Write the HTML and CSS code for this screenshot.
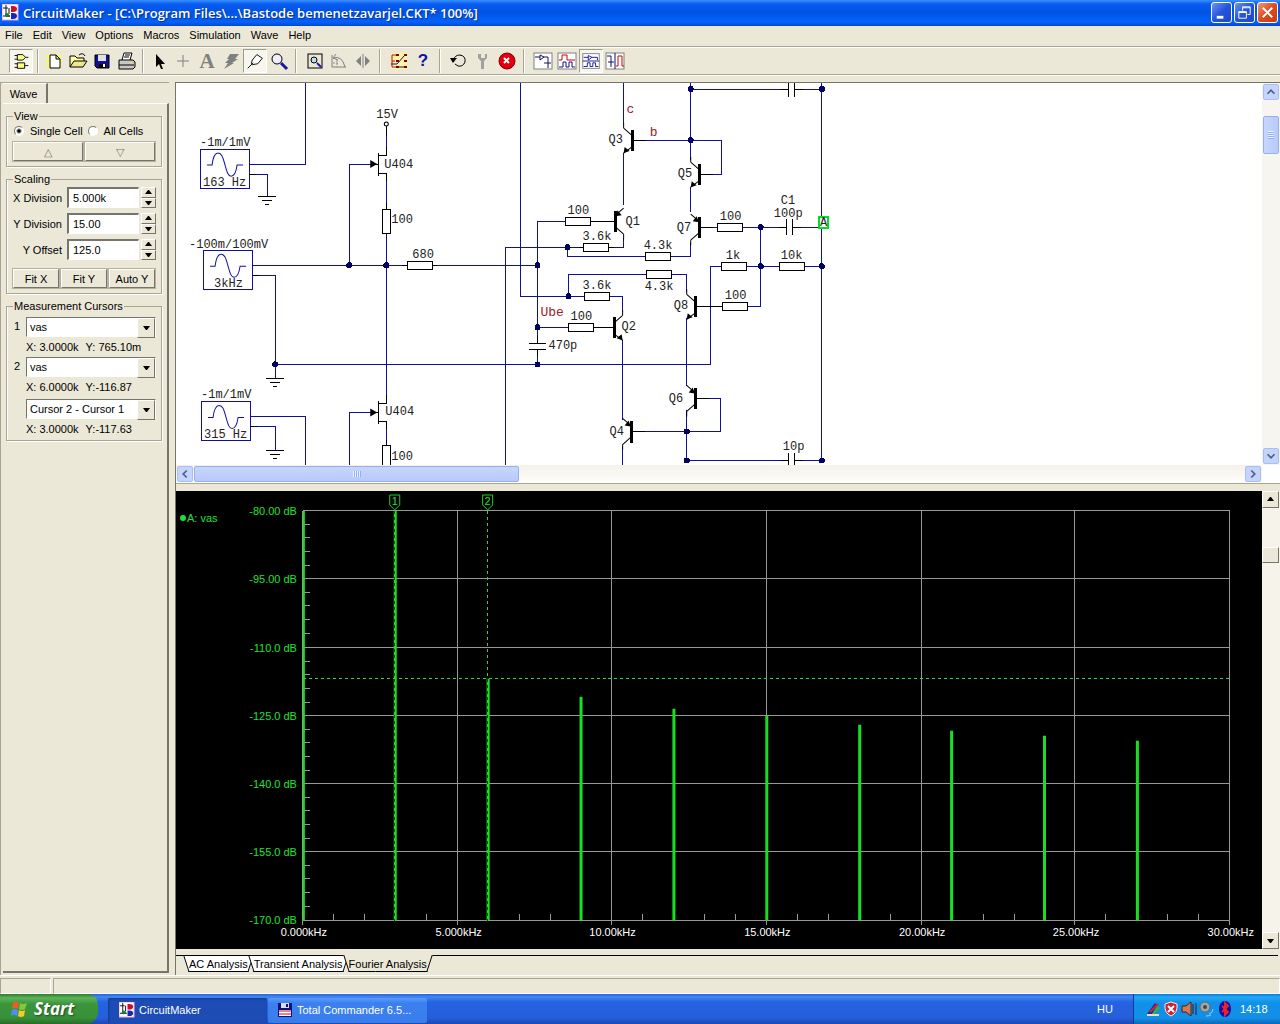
FILE: index.html
```html
<!DOCTYPE html>
<html lang="en">
<head>
    <meta charset="UTF-8">
    <meta name="viewport" content="width=device-width, initial-scale=1.0">
    <title>CircuitMaker</title>
    <link rel="stylesheet" href="styles.css">
</head>
<body>
    <!-- shared shapes -->
    <svg class="defs" aria-hidden="true">
        <defs>
            <g id="logo">
                <rect width="16" height="16" fill="#fff" stroke="#e8a0e0"/>
                <path d="M1 4h5M4 1v11h4M1 12h7M7 4v6" stroke="#111" fill="none"/>
                <path d="M9 2h2q4 0 4 3t-4 3H9z" fill="#c8102e"/>
                <circle cx="5" cy="11" r="2" fill="#168040"/>
                <path d="M9 9h2q4 0 4 3t-4 3H9z" fill="#1428b4"/>
            </g>
            <g id="res"><rect width="25" height="8" fill="#fff" stroke="#000"/></g>
            <g id="dot"><circle r="3" fill="#000060"/></g>
            <g id="ground"><path d="M-9 0H9M-5 4H5M-2 8H2" stroke="#000"/></g>
            <g id="source">
                <rect width="49" height="39" fill="none" stroke="#10109c"/>
                <path class="smooth" d="M7 16h5c1-8 3-12 6-12c4 0 5 5 7 12s3 11 6 11s5-4 6-11h6" fill="none" stroke="#10109c"/>
                <path d="M49 25h7" stroke="#000"/>
            </g>
            <g id="npn">
                <path class="smooth" d="M0-12L8-5M8 7L0 13M0-17v5" stroke="#000"/>
                <path d="M10 0h12" stroke="#000"/>
                <rect x="7" y="-10" width="3" height="21"/>
                <path class="smooth" d="M0 13l1-6l5 4z"/>
            </g>
            <g id="pnp">
                <path class="smooth" d="M0-13L8-6M8 6L0 13M0 13v5" stroke="#000"/>
                <path d="M10 0h12" stroke="#000"/>
                <rect x="7" y="-10" width="3" height="21"/>
                <path class="smooth" d="M8-5l-6-1l4-5z"/>
            </g>
            <g id="jfet">
                <path d="M8-17v8H0M0-11v23M0 9h8v8M-8 0h8" stroke="#000" fill="none"/>
                <path class="smooth" d="M-8-4L-1 0L-8 4z"/>
            </g>
        </defs>
    </svg>

    <header class="titlebar">
        <svg width="17" height="17" viewBox="0 0 17 17"><use href="#logo"/></svg>
        <h1>CircuitMaker - [C:\Program Files\...\Bastode bemenetzavarjel.CKT* 100%]</h1>
        <div class="window-buttons">
            <button type="button" aria-label="Minimize"><svg viewBox="0 0 20 20"><path d="M5 15h7" stroke="#fff" stroke-width="3"/></svg></button>
            <button type="button" aria-label="Restore"><svg viewBox="0 0 20 20"><path d="M4 9h8v7H4zM4 10h8M8 8V4h8v8h-3M8 5h8" stroke="#fff" fill="none"/></svg></button>
            <button type="button" class="close" aria-label="Close"><svg viewBox="0 0 20 20"><path d="M5 5l10 10M15 5L5 15" stroke="#fff" stroke-width="2"/></svg></button>
        </div>
    </header>

    <nav class="menu">
        <a href="#">File</a>
        <a href="#">Edit</a>
        <a href="#">View</a>
        <a href="#">Options</a>
        <a href="#">Macros</a>
        <a href="#">Simulation</a>
        <a href="#">Wave</a>
        <a href="#">Help</a>
    </nav>

    <div class="toolbar">
        <button type="button" class="pressed" aria-label="Parts"><svg viewBox="0 0 24 24"><path d="M8 5h6l3 3l-3 3H8zM8 14h8v6H8z" fill="#ffff80" stroke="#000"/><path d="M5 6h3M5 10h3M17 8h3M5 15h3M5 19h3M16 17h4" stroke="#000"/></svg></button>
        <span class="sep"></span>
        <button type="button" aria-label="New"><svg viewBox="0 0 24 24"><path d="M5 6l3 3M19 6l-3 3M5 18l3-3M19 18l-3-3M4 12h16M12 4v15" stroke="#ffff30" stroke-width="2"/><path d="M8 6h6l4 4v9H8zM14 6v4h4" fill="#fff" stroke="#000"/></svg></button>
        <button type="button" aria-label="Open"><svg viewBox="0 0 24 24"><path d="M4 18V7h5l2 2h7v3" fill="#ffffa0" stroke="#000"/><path d="M4 18l4-6h13l-4 6z" fill="#f0e890" stroke="#000"/><path d="M13 6q4-3 6 1" fill="none" stroke="#000"/></svg></button>
        <button type="button" aria-label="Save"><svg viewBox="0 0 24 24"><path d="M5 6h14v13H7l-2-2z" fill="#101090" stroke="#000"/><path d="M8 6h8v6H8z" fill="#e0e0e0"/><path d="M9 15h7v4H9z" fill="#000"/><path d="M13 15h2v3h-2z" fill="#fff"/></svg></button>
        <button type="button" aria-label="Print"><svg viewBox="0 0 24 24"><path d="M8 11l2-7h8l-2 7" fill="#fff" stroke="#000"/><path d="M11 6h5M10 8h5" stroke="#000"/><path d="M5 11h14l2 2v5l-2 2H5z" fill="#c8c8c8" stroke="#000"/><path d="M5 16h15" stroke="#000"/><path d="M16 14h2" stroke="#ee0"/></svg></button>
        <span class="sep"></span>
        <button type="button" aria-label="Select"><svg viewBox="0 0 24 24"><path d="M9 5v13l3-3l2 5h2l-2-5h4z"/></svg></button>
        <button type="button" aria-label="Wire"><svg viewBox="0 0 24 24"><path d="M12 6v12M6 12h12" stroke="#808080"/></svg></button>
        <button type="button" class="letter" aria-label="Text">A</button>
        <button type="button" aria-label="Delete"><svg viewBox="0 0 24 24"><path d="M11 5h9l-4 5h3l-6 4h2l-10 6l4-6H6l4-4H8z" fill="#808080"/></svg></button>
        <button type="button" class="pressed" aria-label="Probe"><svg viewBox="0 0 24 24"><path d="M4 20l6-6M9 11l5-6l6 4l-5 6l-6 1l-1-1z" fill="#fff" stroke="#000"/></svg></button>
        <button type="button" aria-label="Zoom"><svg viewBox="0 0 24 24"><circle cx="10" cy="10" r="5" fill="#eef" stroke="#000"/><path d="M14 14l6 6" stroke="#1818a0" stroke-width="3"/></svg></button>
        <span class="sep wide"></span>
        <button type="button" aria-label="Fit"><svg viewBox="0 0 24 24"><rect x="5" y="5" width="14" height="14" fill="none" stroke="#000"/><circle cx="11" cy="11" r="3" fill="#bde" stroke="#000"/><path d="M14 14l4 4" stroke="#1818a0" stroke-width="2"/></svg></button>
        <button type="button" aria-label="Rotate"><svg viewBox="0 0 24 24"><path d="M5 6v12h14M6 9q9-3 12 9M9 5l-3 4l5 2" fill="none" stroke="#808080"/><path d="M10 11v7M6 14h6" stroke="#909090" stroke-dasharray="2 1"/></svg></button>
        <button type="button" aria-label="Mirror"><svg viewBox="0 0 24 24"><path d="M12 5v14" stroke="#808080"/><path d="M10 7v10l-5-5zM14 7v10l5-5z" fill="#808080"/></svg></button>
        <span class="sep wide"></span>
        <button type="button" aria-label="Digital"><svg viewBox="0 0 24 24"><rect x="4" y="4" width="16" height="16" fill="#fff4a0"/><path d="M5 6v12M5 6h4M5 12h3M5 18h4" stroke="#c01010" fill="none"/><path d="M9 5h3v2H9zM17 5h3v2h-3zM9 11h3v2H9zM17 11h3v2h-3zM9 17h3v2H9zM17 17h3v2h-3z" fill="#800000"/><path d="M4 15h6l7-8M12 18h5" stroke="#101090" fill="none"/></svg></button>
        <button type="button" class="help" aria-label="Help">?</button>
        <span class="sep wide"></span>
        <button type="button" aria-label="Reset"><svg viewBox="0 0 24 24"><path d="M6 11q2-5 7-5q6 1 5 7q-2 5-7 4l-3-2" fill="none" stroke="#000"/><path d="M3 9h7l-4 5z"/></svg></button>
        <button type="button" aria-label="Setup"><svg viewBox="0 0 24 24"><path d="M7 5v4l3 3v8h3v-8l3-3V5h-2v4h-4V5z" fill="#a0a0a0"/></svg></button>
        <button type="button" aria-label="Stop"><svg viewBox="0 0 24 24"><circle cx="12" cy="12" r="8" fill="#e00010" stroke="#800"/><path d="M9 9l5 5M14 9l-5 5" stroke="#fff" stroke-width="2"/></svg></button>
        <span class="sep wide"></span>
        <button type="button" aria-label="Schematic"><svg viewBox="0 0 24 24"><rect x="3" y="4" width="18" height="16" fill="#fff" stroke="#808080"/><path d="M4 8h5M9 6l4 2l-4 3zM13 8h4v6M13 14h7M17 14v5" fill="none" stroke="#101060"/></svg></button>
        <button type="button" aria-label="Waves"><svg viewBox="0 0 24 24"><rect x="3" y="4" width="18" height="16" fill="#fff" stroke="#808080"/><path d="M4 11h3V6h5v5h8" fill="none" stroke="#d00000"/><path d="M4 18h4v-5h3v5h3v-5h3v5h3" fill="none" stroke="#101090"/></svg></button>
        <button type="button" class="pressed" aria-label="Split horizontally"><svg viewBox="0 0 24 24"><rect x="3" y="4" width="18" height="16" fill="#fff" stroke="#808080"/><path d="M4 8h5M9 6l4 2l-4 3zM13 8h6v3M3 12h18M4 18h4v-4h3v4h3v-4h3v4h3" fill="none" stroke="#101090"/></svg></button>
        <button type="button" aria-label="Split vertically"><svg viewBox="0 0 24 24"><rect x="3" y="4" width="18" height="16" fill="#fff" stroke="#808080"/><path d="M12 4v16M4 7h4v6M5 13h6M8 13v5" fill="none" stroke="#101060"/><path d="M13 17h2V7h4v10h2" fill="none" stroke="#d00000"/></svg></button>
    </div>

    <main class="workspace">
        <aside class="side">
            <button type="button" class="side-tab">Wave</button>
            <div class="side-page">
                <fieldset>
                    <legend>View</legend>
                    <div class="radios">
                        <label><input type="radio" name="cells" checked>Single Cell</label>
                        <label><input type="radio" name="cells">All Cells</label>
                    </div>
                    <div class="button-row">
                        <button type="button" class="dim">△</button>
                        <button type="button" class="dim">▽</button>
                    </div>
                </fieldset>

                <fieldset>
                    <legend>Scaling</legend>
                    <div class="scale-row">
                        <label for="xdiv">X Division</label>
                        <input type="text" id="xdiv" value="5.000k">
                        <div class="spin"><button type="button" aria-label="Up"></button><button type="button" aria-label="Down"></button></div>
                    </div>
                    <div class="scale-row">
                        <label for="ydiv">Y Division</label>
                        <input type="text" id="ydiv" value="15.00">
                        <div class="spin"><button type="button" aria-label="Up"></button><button type="button" aria-label="Down"></button></div>
                    </div>
                    <div class="scale-row">
                        <label for="yoff">Y Offset</label>
                        <input type="text" id="yoff" value="125.0">
                        <div class="spin"><button type="button" aria-label="Up"></button><button type="button" aria-label="Down"></button></div>
                    </div>
                    <div class="button-row fit">
                        <button type="button">Fit X</button>
                        <button type="button">Fit Y</button>
                        <button type="button">Auto Y</button>
                    </div>
                </fieldset>

                <fieldset class="cursors">
                    <legend>Measurement Cursors</legend>
                    <label for="cur1">1</label>
                    <div class="combo"><select id="cur1"><option>vas</option></select></div>
                    <p><span>X: 3.0000k</span><span>Y: 765.10m</span></p>
                    <label for="cur2">2</label>
                    <div class="combo"><select id="cur2"><option>vas</option></select></div>
                    <p><span>X: 6.0000k</span><span>Y:-116.87</span></p>
                    <div class="combo diff"><select aria-label="Difference"><option>Cursor 2 - Cursor 1</option></select></div>
                    <p><span>X: 3.0000k</span><span>Y:-117.63</span></p>
                </fieldset>
            </div>
        </aside>

        <section class="views">
            <div class="schematic">
                <svg class="sheet" viewBox="176 83 1085 381" preserveAspectRatio="xMinYMin slice">
                    <!-- wires -->
                    <g class="wire">
                        <path d="M249 164H305V83M256 174H267V196M252 265H537M259 275H275V378"/>
                        <path d="M250 416H305V464M257 426H275V450M275 364H710V266H721"/>
                        <path d="M386 128V148M349 265V164H371M386 181V403M349 464V412H371M386 429V445"/>
                        <path d="M520 83V296H584M505 464V247H583M537 221H565M537 221V343M537 349V364M537 327H568"/>
                        <path d="M623 83V124M623 153V205M623 238V247H608M567 247V256H645M670 256H690V243"/>
                        <path d="M640 140H721V174H708M690 83V160M690 89H788M794 89H821M821 83V460"/>
                        <path d="M690 187V212M708 227H717M742 227H786M792 227H821M760 227V306H747M746 266H779M804 266H821"/>
                        <path d="M568 296V274H646M671 274H686V292M609 296H622V312M622 340V420M622 446V464"/>
                        <path d="M686 318V386M705 398H720V431H642M686 410V460M686 460H788M794 460H821"/>
                    </g>
                    <!-- sources -->
                    <use href="#source" x="200" y="149"/>
                    <use href="#source" x="203" y="250"/>
                    <use href="#source" x="201" y="401"/>
                    <use href="#ground" x="267" y="196"/>
                    <use href="#ground" x="275" y="378"/>
                    <use href="#ground" x="275" y="450"/>
                    <!-- resistors -->
                    <use href="#res" x="407" y="261"/>
                    <use href="#res" x="565" y="217"/>
                    <use href="#res" x="583" y="243"/>
                    <use href="#res" x="645" y="252"/>
                    <use href="#res" x="646" y="270"/>
                    <use href="#res" x="584" y="292"/>
                    <use href="#res" x="568" y="323"/>
                    <use href="#res" x="717" y="223"/>
                    <use href="#res" x="721" y="262"/>
                    <use href="#res" x="779" y="262"/>
                    <use href="#res" x="722" y="302"/>
                    <rect x="382" y="209" width="8" height="24" fill="#fff" stroke="#000"/>
                    <rect x="382" y="445" width="8" height="24" fill="#fff" stroke="#000"/>
                    <path class="lead" d="M402 265h5M432 265h5M590 221h16M593 327h12M696 306h26M578 247h5M608 247h5M386 203v6M386 440v5"/>
                    <!-- capacitors -->
                    <path class="lead" d="M788 83v14M794 83v14M786 219v16M792 219v16M529 343h16M529 349h16M788 452v12M794 452v12M780 89h8M794 89h8M778 227h8M792 227h8M780 460h8M794 460h8M537 336v7M537 349v7"/>
                    <!-- transistors -->
                    <use href="#jfet" x="378" y="164"/>
                    <use href="#jfet" x="378" y="412"/>
                    <use href="#npn" x="623" y="140"/>
                    <use href="#npn" x="690" y="174"/>
                    <use href="#npn" x="686" y="306"/>
                    <use href="#pnp" x="690" y="227"/>
                    <use href="#pnp" x="686" y="398"/>
                    <use href="#pnp" x="622" y="431"/>
                    <use href="#pnp" transform="translate(623 221) scale(-1 1)"/>
                    <use href="#npn" transform="translate(622 327) scale(-1 1)"/>
                    <path class="lead" d="M386 126v10"/>
                    <circle class="smooth" cx="386" cy="124" r="2" fill="#fff" stroke="#000"/>
                    <!-- junctions -->
                    <use href="#dot" x="349" y="265"/>
                    <use href="#dot" x="386" y="265"/>
                    <use href="#dot" x="275" y="364"/>
                    <use href="#dot" x="537" y="265"/>
                    <use href="#dot" x="537" y="327"/>
                    <use href="#dot" x="537" y="364"/>
                    <use href="#dot" x="567" y="247"/>
                    <use href="#dot" x="568" y="296"/>
                    <use href="#dot" x="690" y="89"/>
                    <use href="#dot" x="690" y="140"/>
                    <use href="#dot" x="821" y="89"/>
                    <use href="#dot" x="760" y="227"/>
                    <use href="#dot" x="760" y="266"/>
                    <use href="#dot" x="821" y="266"/>
                    <use href="#dot" x="686" y="431"/>
                    <use href="#dot" x="686" y="460"/>
                    <use href="#dot" x="821" y="460"/>
                    <rect x="818" y="217" width="9" height="11" fill="#fff" stroke="#00e020" stroke-width="2"/>
                    <!-- labels -->
                    <g class="part">
                        <text x="200" y="146">-1m/1mV</text><text x="203" y="186">163 Hz</text>
                        <text x="189" y="248">-100m/100mV</text><text x="214" y="287">3kHz</text>
                        <text x="201" y="398">-1m/1mV</text><text x="204" y="438">315 Hz</text>
                        <text x="376" y="118">15V</text><text x="384" y="168">U404</text>
                        <text x="391" y="223">100</text><text x="412" y="258">680</text>
                        <text x="385" y="415">U404</text><text x="391" y="459">100</text>
                        <text x="608" y="143">Q3</text><text x="625" y="225">Q1</text>
                        <text x="677" y="177">Q5</text><text x="676" y="231">Q7</text>
                        <text x="567" y="214">100</text><text x="582" y="240">3.6k</text>
                        <text x="643" y="249">4.3k</text><text x="719" y="220">100</text>
                        <text x="780" y="204">C1</text><text x="773" y="217">100p</text>
                        <text x="725" y="259">1k</text><text x="780" y="259">10k</text>
                        <text x="582" y="289">3.6k</text><text x="644" y="290">4.3k</text>
                        <text x="570" y="320">100</text><text x="621" y="330">Q2</text>
                        <text x="673" y="309">Q8</text><text x="724" y="299">100</text>
                        <text x="548" y="349">470p</text><text x="668" y="402">Q6</text>
                        <text x="609" y="435">Q4</text><text x="782" y="449">10p</text>
                        <text x="819" y="226">A</text>
                    </g>
                    <g class="net">
                        <text x="626" y="113">c</text><text x="649" y="136">b</text><text x="540" y="316">Ube</text>
                    </g>
                </svg>
                <div class="xp-scroll vert">
                    <button type="button" aria-label="Scroll up"><svg viewBox="0 0 16 16"><path d="M4 10l4-4l4 4"/></svg></button>
                    <div class="thumb"></div>
                    <button type="button" class="end" aria-label="Scroll down"><svg viewBox="0 0 16 16"><path d="M4 6l4 4l4-4"/></svg></button>
                </div>
                <div class="xp-scroll horiz">
                    <button type="button" aria-label="Scroll left"><svg viewBox="0 0 16 16"><path d="M10 4l-4 4l4 4"/></svg></button>
                    <div class="thumb"></div>
                    <button type="button" class="end" aria-label="Scroll right"><svg viewBox="0 0 16 16"><path d="M6 4l4 4l-4 4"/></svg></button>
                </div>
            </div>

            <div class="analysis">
                <svg class="plot" id="plot" viewBox="176 490 1085 459" preserveAspectRatio="xMinYMin meet">
                    <circle cx="183" cy="517" r="3" fill="#20e030"/>
                    <text class="green" x="187" y="521">A: vas</text>
                </svg>
                <div class="old-scroll">
                    <button type="button" aria-label="Scroll up"></button>
                    <div class="thumb"></div>
                    <button type="button" class="end" aria-label="Scroll down"></button>
                </div>
            </div>

            <div class="tabs">
                <button type="button"><span>AC Analysis</span></button>
                <button type="button"><span>Transient Analysis</span></button>
                <button type="button" class="active"><span>Fourier Analysis</span></button>
            </div>
        </section>
    </main>

    <div class="status"><span></span><span></span></div>

    <footer class="taskbar">
        <button type="button" class="start">
            <svg width="20" height="20" viewBox="0 0 20 20"><path d="M3 4q3-2 6 0l-1 6q-3-2-6 0z" fill="#f05a28"/><path d="M10 4q3 2 7 0l-2 6q-3 2-6 0z" fill="#7ccc3c"/><path d="M2 11q3-2 6 0l-1 6q-3-2-6 0z" fill="#4a90f0"/><path d="M9 11q3 2 6 0l-1 6q-3 2-6 0z" fill="#fcc828"/></svg>
            Start
        </button>
        <button type="button" class="task current"><svg width="16" height="16" viewBox="0 0 17 17"><use href="#logo"/></svg>CircuitMaker</button>
        <button type="button" class="task"><svg width="16" height="16" viewBox="0 0 16 16"><path d="M1 1h14v14H1z" fill="#101080"/><path d="M4 1h8v5H4z" fill="#ddd"/><path d="M9 2h2v3H9z" fill="#101080"/><path d="M2 8h12v6H2z" fill="#fff"/><path d="M2 9h12M2 12h12" stroke="#c01020"/></svg>Total Commander 6.5...</button>
        <span class="lang">HU</span>
        <div class="tray">
            <svg width="16" height="16" viewBox="0 0 16 16"><path d="M2 13l8-11l2 2l-5 9z" fill="#1a2a90"/><path d="M7 13l6-8l2 2l-5 6z" fill="#30b040"/><path d="M5 11l8-8" stroke="#e02020" stroke-width="2"/><path d="M2 14h12" stroke="#e8e0c0" stroke-width="2"/></svg>
            <svg width="16" height="16" viewBox="0 0 16 16"><path d="M8 1l6 2q1 9-6 12q-7-3-6-12z" fill="#d02030" stroke="#eee"/><path d="M5 5l6 6M11 5l-6 6" stroke="#fff" stroke-width="2"/></svg>
            <svg width="16" height="16" viewBox="0 0 16 16"><path d="M1 5h4l5-4v14l-5-4H1z" fill="#d87850" stroke="#402020"/><path d="M12 3v10M15 2v12" stroke="#222"/></svg>
            <svg width="16" height="16" viewBox="0 0 16 16"><circle cx="6" cy="6" r="5" fill="#a0a8a8" stroke="#606868"/><circle cx="6" cy="6" r="2" fill="#404848"/><path d="M10 13q4-1 4-5M7 15q3 0 5-1" stroke="#9cf" fill="none"/></svg>
            <svg width="16" height="16" viewBox="0 0 16 16"><ellipse cx="8" cy="8" rx="6" ry="8" fill="#1010a0"/><path d="M5 5l6 6l-3 3V2l3 3l-6 6" fill="none" stroke="#f02030" stroke-width="2"/></svg>
            <time>14:18</time>
        </div>
    </footer>

    <script>
        const plot = document.getElementById("plot");
        const gridX = [303, 458, 612, 767, 922, 1076, 1231];
        const gridY = [510, 578, 647, 715, 783, 851, 920];
        const freq = ["0.000kHz", "5.000kHz", "10.00kHz", "15.00kHz", "20.00kHz", "25.00kHz", "30.00kHz"];
        const level = ["-80.00 dB", "-95.00 dB", "-110.0 dB", "-125.0 dB", "-140.0 dB", "-155.0 dB", "-170.0 dB"];
        // x, top of every harmonic of 3 kHz
        const harmonics = [[395, 510], [488, 678], [581, 696], [674, 708], [767, 715], [860, 724], [952, 730], [1045, 735], [1138, 740]];

        let grid = "";
        gridX.forEach((x, i) => {
            grid += `M${x} 510V925`;
            for (let n = 1; n < 5 && i < 6; n++) grid += `M${x + n * 31} 913v7`;
        });
        gridY.forEach((y, i) => {
            grid += `M303 ${y}H1231`;
            for (let n = 1; n < 5 && i < 6; n++) grid += `M304 ${Math.round(y + n * 68.2 / 5)}h6`;
        });

        let out = `<path class="grid" d="${grid}"/><path class="axis" d="M304 510V920"/>`;
        harmonics.forEach(([x, top]) => {
            out += `<rect class="bar" x="${x - 1}" y="${top}" width="3" height="${920 - top}"/>`;
        });
        out += `<path class="dash dark" d="M395 510V920M488 678V920"/>`;
        out += `<path class="dash" d="M488 510V678M303 678H1231"/>`;
        [395, 488].forEach((x, i) => {
            out += `<path class="flag" d="M${x - 5} 494h10v10l-5 5l-5-5z"/><text class="green mid" x="${x}" y="504">${i + 1}</text>`;
        });
        gridX.forEach((x, i) => out += `<text class="white mid" x="${x + 1}" y="936">${freq[i]}</text>`);
        gridY.forEach((y, i) => out += `<text class="green end" x="297" y="${y + 4}">${level[i]}</text>`);
        plot.innerHTML += out;
    </script>
</body>
</html>
```
FILE: styles.css
```css
* {
    box-sizing: border-box;
    margin: 0;
    padding: 0;
}
body {
    display: flex;
    flex-direction: column;
    height: 100vh;
    min-height: 700px;
    overflow: hidden;
    background: #ebe8d8;
    color: #000;
    font: 11px/14px "Liberation Sans", Arial, sans-serif;
}
button, input, select {
    font: inherit;
    color: inherit;
    border: none;
    border-radius: 0;
    background: none;
}
svg {
    display: block;
}
.defs {
    position: absolute;
    width: 0;
    height: 0;
}

/* title and menu */
.titlebar {
    display: flex;
    align-items: center;
    gap: 4px;
    height: 26px;
    padding: 0 2px 1px;
    background: linear-gradient(#3a92ff 0, #0a5cf0 4px, #0054e3 12px, #0462fa 22px, #0348d0 26px);
}
.titlebar h1 {
    flex: 1;
    color: #fff;
    font: 600 13px/20px "Open Sans", "Liberation Sans", sans-serif;
    text-shadow: 1px 1px 1px #0a2f8c;
    white-space: nowrap;
}
.window-buttons {
    display: flex;
    gap: 2px;
}
.window-buttons button {
    width: 21px;
    height: 21px;
    border: 1px solid #fff;
    border-radius: 3px;
    background: linear-gradient(135deg, #6a94f4, #2454dc 50%, #1c48cc);
}
.window-buttons .close {
    background: linear-gradient(135deg, #f09878, #dc4c20 50%, #c83c10);
}
.menu {
    display: flex;
    gap: 10px;
    height: 21px;
    padding: 2px 5px;
    border-bottom: 1px solid #a8a595;
}
.menu a {
    color: #000;
    text-decoration: none;
    line-height: 15px;
}

/* toolbar */
.toolbar {
    display: flex;
    align-items: center;
    height: 28px;
    padding: 0 9px;
    border-top: 1px solid #fff;
    border-bottom: 1px solid #a8a595;
}
.toolbar button {
    width: 24px;
    height: 24px;
}
.toolbar .pressed {
    border: 1px solid;
    border-color: #a09d8c #fff #fff #a09d8c;
    background: #f6f5ee;
}
.toolbar .letter {
    color: #808080;
    font: bold 21px/24px "Liberation Serif", serif;
}
.toolbar .help {
    color: #1010a0;
    font: bold 17px/24px "Liberation Sans", sans-serif;
}
.sep {
    width: 9px;
    height: 24px;
    background: linear-gradient(90deg, #a8a595 50%, #fff 50%) 4px 0 / 2px 100% no-repeat;
}
.sep.wide {
    width: 12px;
}

/* left panel */
.workspace {
    display: flex;
    flex: 1;
    min-height: 0;
    padding-top: 6px;
    border-top: 1px solid #fff;
}
.side {
    display: flex;
    flex-direction: column;
    width: 169px;
    margin-right: 6px;
    padding: 0 0 2px 2px;
    border-top: 1px solid #a8a595;
    border-left: 1px solid #a8a595;
}
.side-tab {
    width: 45px;
    height: 20px;
    padding-right: 2px;
    border-top: 1px solid #fff;
    border-right: 2px solid #77756a;
}
.side-page {
    flex: 1;
    padding: 5px 5px 0 3px;
    border-top: 1px solid #fff;
    border-right: 2px solid #77756a;
    border-bottom: 2px solid #77756a;
}
fieldset {
    margin-bottom: 5px;
    padding: 0 5px 4px;
    border: 1px solid #a8a595;
    box-shadow: 1px 1px #fff, inset 1px 0 #fff;
}
legend {
    margin-left: 1px;
    padding: 0 1px;
    line-height: 15px;
}
.radios {
    display: flex;
    gap: 5px;
    height: 17px;
    padding-left: 2px;
}
.radios label {
    display: flex;
    align-items: center;
    gap: 6px;
    height: 13px;
    white-space: nowrap;
}
.radios input {
    appearance: none;
    width: 10px;
    height: 10px;
    border: 1px solid;
    border-color: #77756a #fff #fff #77756a;
    border-radius: 50%;
    background: #fff;
}
.radios input:checked {
    background: radial-gradient(#000 1px, #fff 3px);
}
.button-row {
    display: flex;
}
.button-row.fit {
    margin-top: 8px;
}
.button-row button {
    flex: 1;
    height: 21px;
}
.button-row button, .spin button, .combo::after, .old-scroll button, .old-scroll .thumb {
    border: 1px solid;
    border-color: #fff #77756a #77756a #fff;
    background-color: #ebe8d8;
}
.button-row button {
    outline: 1px solid #b5b2a2;
    outline-offset: -1px;
    border-width: 2px;
}
.button-row .dim {
    color: #77756a;
}
.scale-row {
    display: flex;
    align-items: center;
    gap: 2px;
    height: 21px;
    margin-bottom: 5px;
}
fieldset .scale-row:nth-of-type(3) {
    margin-bottom: 0;
}
.scale-row label {
    flex: 1;
    padding-right: 3px;
    text-align: right;
    white-space: nowrap;
}
.scale-row input {
    width: 72px;
    height: 21px;
    padding: 0 4px;
    border: 1px solid;
    border-top-width: 2px;
    border-left-width: 2px;
    border-color: #77756a #fff #fff #77756a;
    background: #fff;
}
.spin {
    display: flex;
    flex-direction: column;
    width: 15px;
    height: 21px;
}
.spin button {
    flex: 1;
    background: url("data:image/svg+xml,%3Csvg xmlns='http://www.w3.org/2000/svg' width='7' height='4'%3E%3Cpath d='M0 4L3 0h1l3 4z'/%3E%3C/svg%3E") center no-repeat;
}
.spin button + button, .combo::after {
    background: url("data:image/svg+xml,%3Csvg xmlns='http://www.w3.org/2000/svg' width='7' height='4'%3E%3Cpath d='M0 0L3 4h1l3-4z'/%3E%3C/svg%3E") center no-repeat #ebe8d8;
}
.cursors {
    display: grid;
    grid-template-columns: 14px 1fr;
    row-gap: 2px;
    padding-top: 3px;
    padding-bottom: 3px;
}
.cursors label {
    padding-left: 2px;
    line-height: 18px;
}
.cursors p {
    grid-column: 2;
    display: flex;
    gap: 7px;
    height: 16px;
    line-height: 16px;
    white-space: nowrap;
}
.combo {
    position: relative;
    height: 20px;
    border: 1px solid;
    border-color: #77756a #fff #fff #77756a;
    background: #fff;
}
.combo.diff {
    grid-column: 2;
    margin-top: 2px;
}
.combo select {
    appearance: none;
    width: 100%;
    height: 18px;
    padding-left: 3px;
}
.combo::after {
    content: "";
    position: absolute;
    top: 0;
    right: 0;
    width: 16px;
    height: 18px;
    pointer-events: none;
}

/* right side */
.views {
    display: flex;
    flex: 1;
    flex-direction: column;
    min-width: 0;
    border-top: 1px solid #77756a;
    border-left: 1px solid #77756a;
}
.schematic {
    display: grid;
    grid-template-columns: 1fr 18px;
    grid-template-rows: 1fr 18px;
    flex: 400 1 0;
    min-height: 0;
    background: #fff;
    border-bottom: 1px solid #a8a595;
}
.sheet {
    width: 100%;
    height: 100%;
    min-height: 0;
    overflow: hidden;
    shape-rendering: crispEdges;
}
.smooth, .sheet circle {
    shape-rendering: auto;
}
.wire {
    fill: none;
    stroke: #10109c;
}
.lead {
    fill: none;
    stroke: #000;
}
.part text {
    fill: #222;
    font: 12px "Liberation Mono", monospace;
}
.net text {
    fill: #a02028;
    font: 13px "Liberation Mono", monospace;
}
.xp-scroll {
    display: flex;
    padding: 1px;
    background: #f6f5ef;
}
.xp-scroll.vert {
    flex-direction: column;
}
.xp-scroll.horiz {
    background: linear-gradient(#f3f1ea, #fefefb);
}
.xp-scroll button {
    width: 16px;
    height: 16px;
    border: 1px solid #a8bdf0;
    border-radius: 2px;
    background: #c4d4fd;
}
.xp-scroll path {
    fill: none;
    stroke: #4d6185;
    stroke-width: 2;
}
.xp-scroll .end {
    margin-top: auto;
}
.xp-scroll.horiz .end {
    margin: 0 0 0 auto;
}
.xp-scroll .thumb {
    border: 1px solid #98b0e8;
    border-radius: 2px;
    background: repeating-linear-gradient(#eef4fe 0 1px, #8cb0f8 1px 2px) center / 6px 8px no-repeat, linear-gradient(90deg, #c8d6fe, #b8cafa);
}
.xp-scroll.vert .thumb {
    height: 38px;
    margin-top: 16px;
}
.xp-scroll.horiz .thumb {
    width: 30%;
    margin-left: 1px;
    background: repeating-linear-gradient(90deg, #eef4fe 0 1px, #8cb0f8 1px 2px) center / 8px 6px no-repeat, linear-gradient(#c8d6fe, #b8cafa);
}
.analysis {
    display: flex;
    flex: 459 1 0;
    min-height: 0;
    margin-top: 7px;
    background: #000;
}
.plot {
    flex: 1;
    min-width: 0;
    height: 100%;
    font: 11px "Liberation Sans", Arial, sans-serif;
}
.grid {
    fill: none;
    stroke: #989898;
    shape-rendering: crispEdges;
}
.axis {
    stroke: #18e020;
    stroke-width: 2;
}
.bar {
    fill: #18e020;
}
.dash {
    fill: none;
    stroke: #30d838;
    stroke-dasharray: 3 3;
    shape-rendering: crispEdges;
}
.dash.dark {
    stroke: #085008;
}
.flag {
    fill: #000;
    stroke: #20d028;
}
.green {
    fill: #20e030;
}
.white {
    fill: #fff;
}
.mid {
    text-anchor: middle;
}
.end {
    text-anchor: end;
}
.old-scroll {
    display: flex;
    flex-direction: column;
    width: 18px;
    padding-right: 1px;
    background: #f5f3ea;
}
.old-scroll button {
    height: 17px;
    background: url("data:image/svg+xml,%3Csvg xmlns='http://www.w3.org/2000/svg' width='7' height='4'%3E%3Cpath d='M0 4L3 0h1l3 4z'/%3E%3C/svg%3E") center no-repeat #ebe8d8;
}
.old-scroll .end {
    margin-top: auto;
    background: url("data:image/svg+xml,%3Csvg xmlns='http://www.w3.org/2000/svg' width='7' height='4'%3E%3Cpath d='M0 0L3 4h1l3-4z'/%3E%3C/svg%3E") center no-repeat #ebe8d8;
}
.old-scroll .thumb {
    height: 16px;
    margin-top: 39px;
}
.tabs {
    display: flex;
    height: 20px;
    margin: 6px 2px 0 0;
    padding-left: 10px;
    border-top: 1px solid #000;
}
.tabs button {
    position: relative;
    height: 16px;
    padding: 0 3px;
}
.tabs button::before, .tabs button::after {
    content: "";
    position: absolute;
    top: 0;
    bottom: 0;
    width: 60%;
    border-bottom: 1px solid #000;
    background: #fff;
}
.tabs button::before {
    left: 0;
    border-left: 1px solid #000;
    transform: skewX(18deg);
}
.tabs button::after {
    right: 0;
    border-right: 1px solid #000;
    transform: skewX(-18deg);
}
.tabs .active::before, .tabs .active::after {
    top: -1px;
    background: #ebe8d8;
}
.tabs span {
    position: relative;
    z-index: 1;
}

/* status line and taskbar */
.status {
    display: flex;
    gap: 2px;
    height: 19px;
    padding: 2px 0 0;
    border-top: 1px solid #fff;
}
.status span {
    width: 51px;
    border: 1px solid;
    border-color: #a8a595 #fff #fff #a8a595;
}
.status span + span {
    flex: 1;
}
.taskbar {
    display: flex;
    align-items: center;
    height: 30px;
    background: linear-gradient(#2a62d8 0, #4088f4 3px, #2663e0 8px, #245edb 24px, #1c48b0 30px);
    color: #fff;
    white-space: nowrap;
}
.start {
    display: flex;
    align-items: center;
    gap: 4px;
    width: 98px;
    height: 30px;
    margin-right: 10px;
    padding-left: 10px;
    border-radius: 0 10px 12px 0;
    background: linear-gradient(#2f7a30 0, #5cb458 4px, #3c943c 10px, #389038 24px, #286c28 30px);
    font: italic bold 17px/26px "Open Sans", sans-serif;
    text-shadow: 1px 1px 2px #1c4c1c;
}
.task {
    display: flex;
    align-items: center;
    gap: 4px;
    width: 159px;
    height: 25px;
    margin: 2px 1px 0 0;
    padding-left: 9px;
    border-radius: 2px;
    background: linear-gradient(#5c9cfc, #3c80f0 5px, #3a7cec);
    font-size: 11px;
}
.task.current {
    padding-left: 11px;
    background: #1c4cb4;
    box-shadow: inset 1px 1px 2px #143a8c;
}
.lang {
    margin: 0 20px 0 auto;
}
.tray {
    display: flex;
    align-items: center;
    gap: 2px;
    width: 147px;
    height: 30px;
    padding-left: 11px;
    border-left: 1px solid #0c3c90;
    background: linear-gradient(#0c78d8 0, #20a8f4 3px, #1290e8 9px, #1290e8 24px, #0c68b8 30px);
}
.tray time {
    margin-left: 5px;
}
```
